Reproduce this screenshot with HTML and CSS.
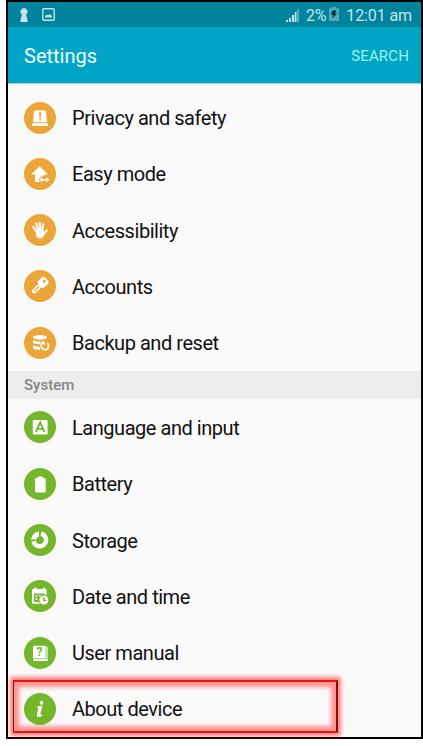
FILE: index.html
```html
<!DOCTYPE html>
<html lang="en">
<head>
    <meta charset="UTF-8">
    <meta name="viewport" content="width=device-width, initial-scale=1.0">
    <title>Settings</title>
    <link rel="stylesheet" href="styles.css">
</head>
<body>

<div class="phone">
    <div class="status-bar">
        <svg class="keyhole" width="8" height="14" viewBox="0 0 8 14"><path d="M4 0a3.700 3.700 0 0 1 2.200 6.500L7.800 14H.2L1.800 6.500A3.700 3.700 0 0 1 4 0z" fill="#c3e5ea"/></svg>
        <svg class="picture" width="13" height="13" viewBox="0 0 13 13"><rect x=".8" y=".8" width="11.4" height="11.4" rx="1" fill="none" stroke="#c3e5ea" stroke-width="1.4"/><path d="M3 9.500V8l1.700-1.500L6 7.300l1.500-1.300L10 8v1.500z" fill="#c3e5ea"/></svg>
        <div class="status-right">
            <svg class="signal" width="13" height="13" viewBox="0 0 13 13"><path d="M0 11h2v2H0zM3 9h2v4H3zM6 6h2v7H6zM8.700 3h1.800v10H8.700z" fill="#c3e5ea"/><path d="M11.200 0H13v13h-1.800z" fill="#5fafbe"/></svg>
            <span class="percent">2%</span>
            <svg class="charge" width="10" height="14" viewBox="0 0 10 14"><path d="M3 0h4v1.300h3V14H0V1.300h3z" fill="#55a9b9"/><path d="M3.500 3.500h4L6 6.200h2.200L3 11.500l1.300-3.700H2z" fill="#062f38"/></svg>
            <span class="clock">12:01 am</span>
        </div>
    </div>

    <div class="header">
        <div class="title">Settings</div>
        <div class="search">SEARCH</div>
    </div>

    <div class="list personal">
        <div class="row">
            <svg class="icon orange" viewBox="0 0 32 32"><path d="M11 8.500h10a1 1 0 0 1 1 1l1 10.700H9l1-10.700a1 1 0 0 1 1-1zM8 21.300h16V24H8z" fill="#fff"/><path d="M15 10.300h2.200l-.3 5.200h-1.600zM15.200 16.500h1.800v1.900h-1.800z" fill="#eca538"/></svg>
            <span>Privacy and safety</span>
        </div>
        <div class="row">
            <svg class="icon orange" viewBox="0 0 32 32"><path d="M15.500 8.300L24 16.600h-3.300V24H11v-7.400H7z" fill="#fff"/><path d="M14.300 21.700l4.200-4.200h3l4.500 4.200-4.500 4.200h-3z" fill="#eca538"/><path d="M15.600 21.700l3-2.700v2h3.800v-2l3.100 2.700-3.100 2.700v-2h-3.800v2z" fill="#fff"/></svg>
            <span>Easy mode</span>
        </div>
        <div class="row">
            <svg class="icon orange" viewBox="0 0 32 32"><g fill="none" stroke="#fff" stroke-linecap="round" stroke-width="2.100"><path d="M9.300 12.800l4 6.200M12.200 9.600l2.500 8M15.700 8.900l.7 8M19.200 10.200l-1.400 8M22.800 16.600L19.500 20"/></g><path d="M11.700 16l7.500-.5 1 3 1.500-.8-2.500 5.100c-1 2.200-5.400 2.200-6.700-.4z" fill="#fff"/></svg>
            <span>Accessibility</span>
        </div>
        <div class="row">
            <svg class="icon orange" viewBox="0 0 32 32"><g transform="rotate(45 19 12)"><rect x="14.800" y="7.500" width="9" height="9.300" rx="2.400" fill="#fff"/><path d="M17 16.300h4.600v8.900l-2.300 2.200-2.300-2.200z" fill="#fff"/><path d="M19.300 17.800v7.200" stroke="#eca538" stroke-width="1.100"/><circle cx="19.300" cy="10.600" r="1.600" fill="#eca538"/></g></svg>
            <span>Accounts</span>
        </div>
        <div class="row">
            <svg class="icon orange" viewBox="0 0 32 32"><ellipse cx="16" cy="10.300" rx="7" ry="2.300" fill="#fff"/><path d="M9 13.300q3 1.500 7.500 1.300v2.700q-5 0-7.500-1.300zM9 18.600q2.500 1 6.500 1.100l.6 3.200Q11.500 23 9 21.600z" fill="#fff"/><path d="M19 15.800a3.700 3.700 0 1 0 4.100.2" fill="none" stroke="#fff" stroke-width="1.700"/><path d="M16.800 14.600h4v3.900z" fill="#fff"/></svg>
            <span>Backup and reset</span>
        </div>
    </div>

    <div class="section">System</div>

    <div class="list">
        <div class="row">
            <svg class="icon green" viewBox="0 0 32 32"><rect x="8.800" y="9" width="14.800" height="14.600" rx="1" fill="#fff"/><path d="M12 20.800l4.200-9.400 4.200 9.400M13.500 17.900h5.400" fill="none" stroke="#74b72c" stroke-width="1.900"/></svg>
            <span>Language and input</span>
        </div>
        <div class="row">
            <svg class="icon green" viewBox="0 0 32 32"><path d="M13.700 8.500h5V10h1.800a1.200 1.200 0 0 1 1.200 1.200v12a1.200 1.200 0 0 1-1.200 1.200h-8.300a1.200 1.200 0 0 1-1.200-1.200v-12a1.200 1.200 0 0 1 1.200-1.200h1.500z" fill="#fff"/></svg>
            <span>Battery</span>
        </div>
        <div class="row">
            <svg class="icon green" viewBox="0 0 32 32"><path d="M17 9.800a6.300 6.300 0 1 1-7.400 7.400" fill="none" stroke="#fff" stroke-width="4.600"/><path d="M15 7.500v5a4 4 0 0 0-2.800 2.900H7A9 9 0 0 1 15 7.500z" fill="#fff"/></svg>
            <span>Storage</span>
        </div>
        <div class="row">
            <svg class="icon green" viewBox="0 0 32 32"><path d="M8 9h2V7.700h2.500V9h6V7.700H21V9h1.500v4.500H8zM8 13h2v9h6v1.700H9a1 1 0 0 1-1-1z" fill="#fff"/><path d="M11.500 15h1.800v1.800h-1.800zM15 15h1.800v1.800H15zM11.500 18.300h1.800v1.800h-1.800zM20.500 13h2v2h-2z" fill="#fff"/><circle cx="19.900" cy="20" r="5.400" fill="#74b72c"/><circle cx="19.900" cy="20" r="4.500" fill="#fff"/><path d="M19.800 17v3.400h2.800" fill="none" stroke="#74b72c" stroke-width="1.300"/></svg>
            <span>Date and time</span>
        </div>
        <div class="row">
            <svg class="icon green" viewBox="0 0 32 32"><path d="M9 8.800h12.700v12.700H9zM22.400 9.800h1.200V24H10l-1-1.800h13.400z" fill="#fff"/><text class="question" x="15.600" y="19.300">?</text></svg>
            <span>User manual</span>
        </div>
        <div class="row">
            <svg class="icon green" viewBox="0 0 32 32"><circle cx="17.500" cy="9.900" r="1.900" fill="#fff"/><path d="M13.600 13.100h4.700l-2.100 8.700 2-.5-.4 1.600c-2.500 1.600-5.600 1.500-4.900-1.500l1.600-6.700h-1.300z" fill="#fff"/></svg>
            <span>About device</span>
        </div>
    </div>

    <div class="highlight"></div>
</div>

</body>
</html>
```

FILE: styles.css
```css
body {
    margin: 0;
    background: #fff;
    font-family: Roboto, "Liberation Sans", sans-serif;
}

.phone {
    position: relative;
    box-sizing: border-box;
    width: 417px;
    height: 739px;
    margin-left: 6px;
    border: 2px solid #000;
    background: #fafafa;
}

.status-bar {
    display: flex;
    align-items: center;
    height: 25px;
    padding: 0 9px 0 12px;
    background: #00849e;
    color: #c3e5ea;
    font-size: 16px;
}

.picture {
    margin-left: 14px;
}

.status-right {
    display: flex;
    align-items: center;
    margin-left: auto;
    padding-top: 1px;
}

.percent {
    margin: 0 3px 0 7px;
    letter-spacing: -0.2px;
}

.charge {
    margin-top: -2px;
}

.clock {
    margin-left: 7px;
    letter-spacing: -0.1px;
}

.header {
    display: flex;
    align-items: center;
    justify-content: space-between;
    box-sizing: border-box;
    height: 57px;
    padding: 2px 12px 0 16px;
    background: #00a5c6;
    border-bottom: 1px solid #a5cfd9;
    color: #f0fbfd;
}

.title {
    font-size: 20px;
}

.search {
    color: #99f5f0;
    font-size: 15px;
    letter-spacing: 0.15px;
}

.personal {
    padding-top: 5.4px;
}

.row {
    display: flex;
    align-items: center;
    height: 56.3px;
    padding-left: 16px;
    color: #111;
    font-size: 20px;
    letter-spacing: -0.46px;
}

.row span {
    margin-left: 16px;
    padding-top: 1px;
}

.icon {
    width: 32px;
    height: 32px;
    border-radius: 50%;
}

.orange {
    background: #eca538;
}

.green {
    background: #74b72c;
}

.question {
    fill: #74b72c;
    font-size: 12px;
    font-weight: bold;
    text-anchor: middle;
    letter-spacing: 0;
}

.section {
    height: 28.4px;
    padding-left: 16px;
    background: #ededed;
    color: #858585;
    font-size: 15px;
    font-weight: 500;
    line-height: 29px;
}

/* glowing frame around the last item */
.highlight {
    position: absolute;
    left: 5px;
    top: 678px;
    box-sizing: border-box;
    width: 325px;
    height: 53px;
    border: 2px solid #e81414;
    border-left: 1px solid #7c1010;
    border-right-color: #7c1010;
    box-shadow: 0 0 4px 3px rgba(255, 60, 60, 0.65), inset 0 0 4px 5px rgba(255, 60, 60, 0.55);
}
```
